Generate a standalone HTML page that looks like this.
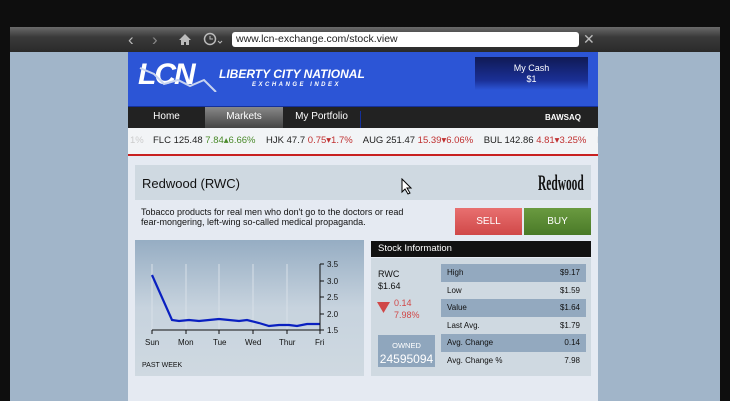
<!DOCTYPE html>
<html><head><style>
*{margin:0;padding:0;box-sizing:border-box}
body{width:730px;height:401px;overflow:hidden;background:#0e0e0e;font-family:"Liberation Sans",sans-serif;position:relative}
.a{position:absolute}
</style></head><body>
<div class="a" style="left:10px;top:27px;width:710px;height:25px;background:linear-gradient(#6a6a6a,#3a3a3a 40%,#2a2a2a)"></div>
<div class="a" style="left:128px;top:30px;color:#bbb;font-size:17px">‹</div>
<div class="a" style="left:152px;top:30px;color:#888;font-size:17px">›</div>
<svg class="a" style="left:178px;top:33px" width="14" height="13"><path d="M7 1L1 7h2v5h3V9h2v3h3V7h2z" fill="#bbb"/></svg>
<svg class="a" style="left:203px;top:32px" width="22" height="14"><circle cx="7" cy="7" r="5.5" fill="none" stroke="#bbb" stroke-width="1.5"/><path d="M7 4v3h3" stroke="#bbb" fill="none"/><path d="M15 9l2 2 2-2" stroke="#bbb" fill="none"/></svg>
<div class="a" style="left:232px;top:32px;width:347px;height:15px;background:#fff;border-radius:3px;font-size:10.5px;line-height:15px;padding-left:4px;color:#222">www.lcn-exchange.com/stock.view</div>
<div class="a" style="left:583px;top:31px;color:#bbb;font-size:14px">✕</div>
<div class="a" style="left:10px;top:52px;width:710px;height:349px;background:#a1b5c9"></div>
<div class="a" style="left:128px;top:52px;width:470px;height:54px;background:#2c55d6"></div>
<div class="a" style="left:138px;top:58px;color:#fff;font-size:30px;font-weight:bold;font-style:italic;letter-spacing:-2px">LCN</div>
<svg class="a" style="left:138px;top:62px" width="80" height="30"><path d="M2 6l14 6 10 10 14-4 12 6 14-6 12 12" stroke="#c8d4f0" stroke-width="2" fill="none"/></svg>
<div class="a" style="left:219px;top:67px;color:#fff;font-size:12px;font-weight:bold;font-style:italic">LIBERTY CITY NATIONAL</div>
<div class="a" style="left:252px;top:82px;color:#fff;font-size:6px;font-weight:bold;font-style:italic;letter-spacing:2.5px">EXCHANGE INDEX</div>
<div class="a" style="left:475px;top:57px;width:113px;height:33px;background:linear-gradient(#101a55,#1a2f95 70%,#2c55d6);color:#fff;font-size:9px;text-align:center;padding-top:6px;line-height:11px">My Cash<br>$1</div>
<div class="a" style="left:128px;top:106px;width:470px;height:22px;background:#222;border-top:1px solid #14309a"></div>
<div class="a" style="left:205px;top:107px;width:78px;height:21px;background:linear-gradient(#888,#444)"></div>
<div class="a" style="left:128px;top:111px;width:77px;text-align:center;color:#fff;font-size:10px">Home</div>
<div class="a" style="left:205px;top:111px;width:78px;text-align:center;color:#fff;font-size:10px">Markets</div>
<div class="a" style="left:283px;top:111px;width:78px;text-align:center;color:#fff;font-size:10px;border-right:1px solid #14309a;height:17px">My Portfolio</div>
<div class="a" style="left:545px;top:113px;color:#fff;font-size:8px;font-weight:bold">BAWSAQ</div>
<div class="a" style="left:128px;top:128px;width:470px;height:26px;background:#f2f4f6;font-size:9.5px;line-height:26px;white-space:nowrap;overflow:hidden;color:#222;padding-left:25px">
<span style="position:absolute;left:2px;color:#ccc">1%</span>FLC 125.48 <span style="color:#4a8a2a">7.84▴6.66%</span>&nbsp;&nbsp;&nbsp; HJK 47.7 <span style="color:#c03030">0.75▾1.7%</span>&nbsp;&nbsp;&nbsp; AUG 251.47 <span style="color:#c03030">15.39▾6.06%</span>&nbsp;&nbsp;&nbsp; BUL 142.86 <span style="color:#c03030">4.81▾3.25%</span>&nbsp;&nbsp;&nbsp; <span style="color:#ccc">HAF 1</span></div>
<div class="a" style="left:128px;top:154px;width:470px;height:2px;background:#c82020"></div>
<div class="a" style="left:128px;top:156px;width:470px;height:245px;background:#e5eaf2"></div>
<div class="a" style="left:135px;top:165px;width:456px;height:35px;background:#cfd9e1"></div>
<div class="a" style="left:142px;top:176px;font-size:13px;color:#111">Redwood (RWC)</div>
<div class="a" style="left:538px;top:170px;font-family:'Liberation Serif',serif;font-size:22px;font-weight:bold;color:#111;transform:scaleX(0.52);transform-origin:0 0;white-space:nowrap;line-height:26px">Redwood</div>
<svg class="a" style="left:401px;top:178px" width="12" height="17"><path d="M1 1v13l3-3 3 5 2-1-3-5h4z" fill="#fff" stroke="#000"/></svg>
<div class="a" style="left:141px;top:207px;font-size:9px;line-height:10px;color:#111">Tobacco products for real men who don't go to the doctors or read<br>fear-mongering, left-wing so-called medical propaganda.</div>
<div class="a" style="left:455px;top:208px;width:67px;height:27px;background:linear-gradient(#e87070,#d04848);color:#fff;font-size:10px;text-align:center;line-height:27px">SELL</div>
<div class="a" style="left:524px;top:208px;width:67px;height:27px;background:linear-gradient(#6a9a40,#4a7a28);color:#fff;font-size:10px;text-align:center;line-height:27px">BUY</div>
<div class="a" style="left:135px;top:240px;width:229px;height:136px;background:linear-gradient(#96adc3,#c7d3de 50%,#cfd9e1)"></div>
<svg class="a" style="left:135px;top:240px" width="229" height="136" font-family="Liberation Sans" font-size="8" fill="#111">
<g stroke="#d8e0e8" stroke-width="1"><path d="M17 24V90M51 24V90M84 24V90M118 24V90M152 24V90"/></g>
<path d="M17 35L37 80 44 81 54 80 64 81 74 80 84 79 94 80 104 81 112 80 124 83 134 86 144 85 154 85 162 86 172 84 185 84" stroke="#0a20c0" stroke-width="2.2" fill="none"/>
<path d="M17 90V94M51 90V94M84 90V94M118 90V94M152 90V94M185 90V94" stroke="#111"/>
<path d="M17 90H185M185 24V90M185 24h4M185 41h4M185 57h4M185 74h4M185 90h4" stroke="#111" fill="none"/>
<text x="192" y="27">3.5</text><text x="192" y="44">3.0</text><text x="192" y="60">2.5</text><text x="192" y="77">2.0</text><text x="192" y="93">1.5</text>
<text x="10" y="105">Sun</text><text x="43" y="105">Mon</text><text x="78" y="105">Tue</text><text x="110" y="105">Wed</text><text x="144" y="105">Thur</text><text x="180" y="105">Fri</text>
<text x="7" y="127" font-size="7">PAST WEEK</text>
</svg>
<div class="a" style="left:371px;top:241px;width:220px;height:16px;background:#111;color:#fff;font-size:9.5px;line-height:16px;padding-left:7px">Stock Information</div>
<div class="a" style="left:371px;top:258px;width:220px;height:118px;background:#cfd9e1;font-size:8px;color:#111"></div>
<div class="a" style="left:378px;top:268px;font-size:9px;line-height:12px;color:#111">RWC<br>$1.64</div>
<svg class="a" style="left:377px;top:302px" width="13" height="11"><path d="M0 0h13L6.5 11z" fill="#d04848"/></svg>
<div class="a" style="left:394px;top:297px;font-size:9px;line-height:12px;color:#d04848">0.14<br>7.98%</div>
<div class="a" style="left:378px;top:335px;width:57px;height:32px;background:#8fa6bd;color:#fff;text-align:center;font-size:7.5px;padding-top:6px">OWNED<div style="font-size:12px;margin-top:2px">24595094</div></div>
<div class="a" style="left:441px;top:264px;width:145px;font-size:8px;color:#111">
<div style="height:17.5px;background:#93a9bf;display:flex;justify-content:space-between;align-items:center;padding:0 6px">High<span>$9.17</span></div>
<div style="height:17.5px;display:flex;justify-content:space-between;align-items:center;padding:0 6px">Low<span>$1.59</span></div>
<div style="height:17.5px;background:#93a9bf;display:flex;justify-content:space-between;align-items:center;padding:0 6px">Value<span>$1.64</span></div>
<div style="height:17.5px;display:flex;justify-content:space-between;align-items:center;padding:0 6px">Last Avg.<span>$1.79</span></div>
<div style="height:17.5px;background:#93a9bf;display:flex;justify-content:space-between;align-items:center;padding:0 6px">Avg. Change<span>0.14</span></div>
<div style="height:17.5px;display:flex;justify-content:space-between;align-items:center;padding:0 6px">Avg. Change %<span>7.98</span></div>
</div>
</body></html>
